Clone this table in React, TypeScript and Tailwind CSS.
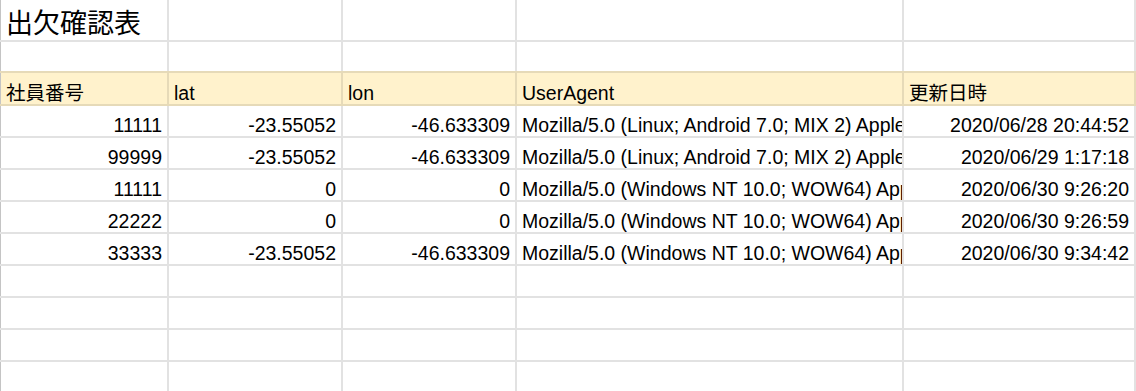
const rows = [
  ["11111", "-23.55052", "-46.633309", "Mozilla/5.0 (Linux; Android 7.0; MIX 2) AppleWebKit/537.36 (KHTML, like Gecko)", "2020/06/28 20:44:52"],
  ["99999", "-23.55052", "-46.633309", "Mozilla/5.0 (Linux; Android 7.0; MIX 2) AppleWebKit/537.36 (KHTML, like Gecko)", "2020/06/29 1:17:18"],
  ["11111", "0", "0", "Mozilla/5.0 (Windows NT 10.0; WOW64) AppleWebKit/537.36 (KHTML, like Gecko)", "2020/06/30 9:26:20"],
  ["22222", "0", "0", "Mozilla/5.0 (Windows NT 10.0; WOW64) AppleWebKit/537.36 (KHTML, like Gecko)", "2020/06/30 9:26:59"],
  ["33333", "-23.55052", "-46.633309", "Mozilla/5.0 (Windows NT 10.0; WOW64) AppleWebKit/537.36 (KHTML, like Gecko)", "2020/06/30 9:34:42"],
];

const headers = ["社員番号", "lat", "lon", "UserAgent", "更新日時"];

const widths = ["w-[169px]", "w-[174px]", "w-[174px]", "w-[387px]", "flex-1 min-w-0"];

function Cell({
  i,
  children,
  align = "left",
  head = false,
  h = "h-[30px]",
}: {
  i: number;
  children?: React.ReactNode;
  align?: "left" | "right";
  head?: boolean;
  h?: string;
}) {
  return (
    <div
      className={`${widths[i]} ${h} shrink-0 flex items-end overflow-hidden whitespace-nowrap border-r-2 ${
        i === 0 ? "border-l border-l-[#c4c4c4]" : ""
      } ${head ? "border-r-[#e6dab8]" : "border-r-[#e2e2e2]"} ${
        align === "right" ? "justify-end pr-[5px]" : "pl-[5px]"
      }`}
    >
      <span className="leading-[22px]">{children}</span>
    </div>
  );
}

export default function App() {
  return (
    <div
      className="w-[1136px] h-[391px] overflow-hidden bg-white text-[19.5px] text-black"
      style={{ fontFamily: '"Liberation Sans", Arial, "Noto Sans CJK JP", sans-serif' }}
    >
      {/* title */}
      <div className="flex border-b-2 border-[#e2e2e2]">
        <Cell i={0} h="h-[40px]">
          <span className="text-[27px] leading-[32px]">出欠確認表</span>
        </Cell>
        <Cell i={1} h="h-[40px]" />
        <Cell i={2} h="h-[40px]" />
        <Cell i={3} h="h-[40px]" />
        <Cell i={4} h="h-[40px]" />
      </div>
      {/* blank row */}
      <div className="flex border-b-2 border-[#e6dab8]">
        {[0, 1, 2, 3, 4].map((i) => (
          <Cell key={i} i={i} h="h-[29px]" />
        ))}
      </div>
      {/* header */}
      <div className="flex bg-[#fff2cc] border-b-2 border-[#e6dab8]">
        {headers.map((t, i) => (
          <Cell key={t} i={i} head h="h-[31px]">
            {t}
          </Cell>
        ))}
      </div>
      {rows.map((r, k) => (
        <div key={k} className="flex border-b-2 border-[#e2e2e2]">
          <Cell i={0} align="right">{r[0]}</Cell>
          <Cell i={1} align="right">{r[1]}</Cell>
          <Cell i={2} align="right">{r[2]}</Cell>
          <Cell i={3}>{r[3]}</Cell>
          <Cell i={4} align="right">{r[4]}</Cell>
        </div>
      ))}
      {[0, 1, 2, 3, 4].map((k) => (
        <div key={k} className="flex border-b-2 border-[#e2e2e2]">
          {[0, 1, 2, 3, 4].map((i) => (
            <Cell key={i} i={i} />
          ))}
        </div>
      ))}
    </div>
  );
}
